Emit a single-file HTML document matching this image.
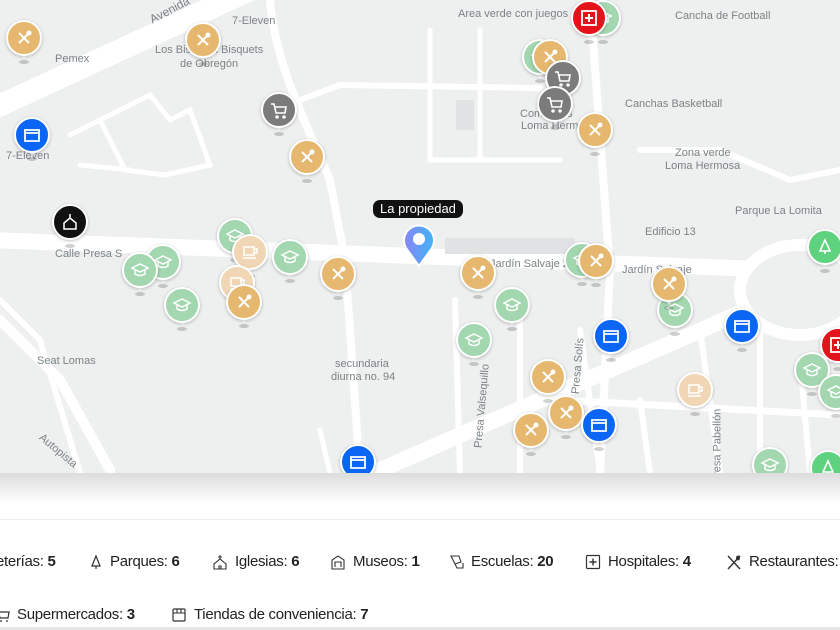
<!DOCTYPE html>
<html><head><meta charset="utf-8"><style>
*{margin:0;padding:0;box-sizing:border-box}
body{width:840px;height:630px;overflow:hidden;background:#fff;font-family:"Liberation Sans",sans-serif;position:relative}
#map{position:absolute;left:0;top:0;width:840px;height:473px;background:#eeefef;overflow:hidden}
.m{position:absolute;width:36px;height:46px;margin-left:-18px;margin-top:-18px}
.m .c{position:absolute;left:0;top:0;width:36px;height:36px;border-radius:50%;border:2.5px solid #fff;box-shadow:0 1px 3px rgba(0,0,0,.25);display:flex;align-items:center;justify-content:center}
.m .t{position:absolute;left:12px;top:31px;width:0;height:0;border-left:6px solid transparent;border-right:6px solid transparent;border-top:8px solid #fff}
.m .s{position:absolute;left:13px;top:40px;width:10px;height:4px;border-radius:50%;background:rgba(0,0,0,.18)}
.o{background:#e6b86f}.g{background:#a2d7b0}.cf{background:#f0d6b4}.b{background:#0b66f5}.gr{background:#7b7b7b}.r{background:#e4121b}.k{background:#111}.p{background:#5fd27f}
.lbl{position:absolute;color:#7b8387;font-size:11px;white-space:nowrap}
.lt{position:absolute;font-size:15px;color:#222;white-space:nowrap;letter-spacing:-0.3px}
.lt b{font-weight:700}
.li{position:absolute;width:16px;height:16px}
</style></head><body>
<div id="map">
<svg width="840" height="473" style="position:absolute;left:0;top:0">
<g stroke="#fff" fill="none" stroke-linecap="round">
<path d="M-10 110 L250 -10" stroke-width="22"/>
<path d="M-10 240 L840 272" stroke-width="16"/>
<path d="M380 470 L770 300 L840 285" stroke-width="16"/>
<path d="M270 0 C275 60 300 110 330 180 L345 260 L360 473" stroke-width="8"/>
<path d="M300 100 L340 85 L540 88" stroke-width="6"/>
<path d="M70 135 L150 95 L170 120 L190 110 L210 165 L165 175 L125 170 L100 120 M80 165 L130 170" stroke-width="5"/>
<path d="M430 30 L430 160 L560 160 M480 30 L480 160" stroke-width="5"/>
<path d="M590 0 L610 270 L600 473" stroke-width="8"/>
<path d="M640 150 L720 150 L790 180 L840 170" stroke-width="6"/>
<path d="M0 320 L60 380 L110 470" stroke-width="10"/>
<path d="M0 300 L40 340 L80 473" stroke-width="6"/>
<path d="M455 300 L460 473 M520 320 L520 473 M580 330 L600 473 M640 400 L650 473 M700 330 L720 473 M760 330 L760 473 M800 360 L810 473" stroke-width="6"/>
<path d="M560 400 L840 415" stroke-width="7"/>
<path d="M320 430 L330 473" stroke-width="5"/>
</g>
<ellipse cx="800" cy="290" rx="60" ry="45" fill="#eeefef" stroke="#fff" stroke-width="12"/>
<rect x="456" y="100" width="18" height="30" fill="#e0e2e3"/>
<rect x="445" y="238" width="130" height="16" fill="#e0e2e3"/>
</svg>
<div class="lbl" style="left:148px;top:3px;transform:rotate(-28deg);font-size:12px">Avenida</div>
<div class="lbl" style="left:232px;top:15px">7-Eleven</div>
<div class="lbl" style="left:55px;top:53px">Pemex</div>
<div class="lbl" style="left:155px;top:44px">Los Bisquets Bisquets</div>
<div class="lbl" style="left:180px;top:58px">de Obregón</div>
<div class="lbl" style="left:6px;top:150px">7-Eleven</div>
<div class="lbl" style="left:458px;top:8px">Area verde con juegos</div>
<div class="lbl" style="left:675px;top:10px">Cancha de Football</div>
<div class="lbl" style="left:625px;top:98px">Canchas Basketball</div>
<div class="lbl" style="left:675px;top:147px">Zona verde</div>
<div class="lbl" style="left:665px;top:160px">Loma Hermosa</div>
<div class="lbl" style="left:735px;top:205px">Parque La Lomita</div>
<div class="lbl" style="left:645px;top:226px">Edificio 13</div>
<div class="lbl" style="left:490px;top:258px">Jardín Salvaje 2</div>
<div class="lbl" style="left:622px;top:264px">Jardín Salvaje</div>
<div class="lbl" style="left:55px;top:248px">Calle Presa S</div>
<div class="lbl" style="left:37px;top:355px">Seat Lomas</div>
<div class="lbl" style="left:335px;top:358px">secundaria</div>
<div class="lbl" style="left:331px;top:371px">diurna no. 94</div>
<div class="lbl" style="left:520px;top:108px">Comercios</div>
<div class="lbl" style="left:521px;top:120px">Loma Hermosa</div>
<div class="lbl" style="left:440px;top:400px;transform:rotate(-85deg)">Presa Valsequillo</div>
<div class="lbl" style="left:550px;top:360px;transform:rotate(-85deg)">Presa Solís</div>
<div class="lbl" style="left:680px;top:440px;transform:rotate(-90deg)">Presa Pabellón</div>
<div class="lbl" style="left:35px;top:445px;transform:rotate(40deg)">Autopista</div>

<div id="mk"></div>
<div style="position:absolute;left:373px;top:200px;background:#111;color:#fff;font-size:13px;padding:1px 7px 2px;border-radius:7px">La propiedad</div>
<svg style="position:absolute;left:401px;top:222px" width="36" height="46" viewBox="0 0 36 46"><defs><linearGradient id="pg" x1="0" x2="1"><stop offset="0" stop-color="#8a86f6"/><stop offset="1" stop-color="#3fb4f5"/></linearGradient></defs><path d="M18 44 L5 26 A15 15 0 1 1 31 26 Z" fill="url(#pg)" stroke="#fff" stroke-width="2"/><circle cx="18" cy="17" r="6" fill="#fff"/></svg>
</div>
<div style="position:absolute;left:0;top:473px;width:840px;height:30px;background:linear-gradient(#dcdcdc,#fff)"></div>
<div style="position:absolute;left:0;top:519px;width:840px;height:1px;background:#ececec"></div>

<div class="lt" style="left:-4px;top:553px">eterías: <b>5</b></div>
<svg class="li" style="left:88px;top:554px" viewBox="0 0 16 16"><path d="M8 2 L4 12 H12 Z M8 12 V15" stroke="#333" stroke-width="1.2" fill="none"/></svg>
<div class="lt" style="left:110px;top:553px">Parques: <b>6</b></div>
<svg class="li" style="left:212px;top:554px" viewBox="0 0 16 16"><path d="M8 1 V5 M6 3 H10 M2 15 V10 L8 5 L14 10 V15 Z M7 15 V12 H9 V15" stroke="#333" stroke-width="1.1" fill="none"/></svg>
<div class="lt" style="left:235px;top:553px">Iglesias: <b>6</b></div>
<svg class="li" style="left:330px;top:554px" viewBox="0 0 16 16"><path d="M2 15 V6 L8 2 L14 6 V15 Z M5 13 V8 H11 V13" stroke="#333" stroke-width="1.1" fill="none"/></svg>
<div class="lt" style="left:353px;top:553px">Museos: <b>1</b></div>
<svg class="li" style="left:449px;top:554px" viewBox="0 0 16 16"><path d="M2 2 L10 2 L12 8 L6 10 Z M6 10 L8 14 H14 V9" stroke="#333" stroke-width="1.1" fill="none"/></svg>
<div class="lt" style="left:471px;top:553px">Escuelas: <b>20</b></div>
<svg class="li" style="left:585px;top:554px" viewBox="0 0 16 16"><rect x="1.5" y="1.5" width="13" height="13" rx="1" stroke="#333" stroke-width="1.2" fill="none"/><path d="M8 4.5 V11.5 M4.5 8 H11.5" stroke="#333" stroke-width="1.4"/></svg>
<div class="lt" style="left:608px;top:553px">Hospitales: <b>4</b></div>
<svg class="li" style="left:726px;top:554px" viewBox="0 0 16 16"><path d="M2 2 L14 15 M14 2 L2 15" stroke="#333" stroke-width="1.4"/><ellipse cx="12" cy="4" rx="2" ry="2.5" fill="#333"/></svg>
<div class="lt" style="left:749px;top:553px">Restaurantes: <b>9</b></div>

<svg class="li" style="left:-6px;top:607px" viewBox="0 0 16 16"><path d="M1 2 H4 L6 11 H14 L15 5 H5 M6 14 H8 M12 14 H14" stroke="#333" stroke-width="1.2" fill="none"/></svg>
<div class="lt" style="left:17px;top:606px">Supermercados: <b>3</b></div>
<svg class="li" style="left:171px;top:607px" viewBox="0 0 16 16"><rect x="2" y="2" width="12" height="12" rx="1" stroke="#333" stroke-width="1.2" fill="none"/><path d="M2 6 H14 M6 2 V6 M10 2 V6" stroke="#333" stroke-width="1.1"/></svg>
<div class="lt" style="left:194px;top:606px">Tiendas de conveniencia: <b>7</b></div>
<div style="position:absolute;left:0;top:627px;width:840px;height:3px;background:#e6e6e6"></div>
<script>
var M=[[540,57,'g'],[603,18,'g'],[24,38,'o'],[203,40,'o'],[32,135,'b'],[279,110,'gr'],[307,157,'o'],[70,222,'k'],[235,236,'g'],[250,252,'cf'],[163,262,'g'],[140,270,'g'],[290,257,'g'],[237,283,'cf'],[244,302,'o'],[182,305,'g'],[338,274,'o'],[478,273,'o'],[512,305,'g'],[474,340,'g'],[550,57,'o'],[589,18,'r'],[563,78,'gr'],[555,104,'gr'],[595,130,'o'],[582,260,'g'],[596,261,'o'],[675,310,'g'],[669,284,'o'],[611,336,'b'],[742,326,'b'],[825,247,'p'],[548,377,'o'],[566,413,'o'],[531,430,'o'],[599,425,'b'],[695,390,'cf'],[838,345,'r'],[812,370,'g'],[836,392,'g'],[358,462,'b'],[770,465,'g'],[828,468,'p']];
var ic={o:'<path d="M11 11 L21 21 M21 11 L11 21" stroke="#fff" stroke-width="2"/><circle cx="21" cy="11" r="2.5" fill="#fff"/>',g:'<path d="M8 14 L16 10 L24 14 L16 18 Z M11 16 V20 Q16 23 21 20 V16" stroke="#fff" stroke-width="1.5" fill="none"/>',cf:'<path d="M10 11 H20 V19 H10 Z M20 13 H23 V17 H20 M9 22 H22" stroke="#fff" stroke-width="1.5" fill="none"/>',b:'<path d="M9 11 H23 V22 H9 Z M9 14 H23" stroke="#fff" stroke-width="1.8" fill="none"/>',gr:'<path d="M8 10 H11 L13 19 H22 L23 13 H12 M14 22 A1 1 0 1 0 14.1 22 M21 22 A1 1 0 1 0 21.1 22" stroke="#fff" stroke-width="1.6" fill="none"/>',r:'<rect x="9" y="9" width="14" height="14" fill="none" stroke="#fff" stroke-width="1.8"/><path d="M16 12 V20 M12 16 H20" stroke="#fff" stroke-width="2"/>',k:'<path d="M16 8 V12 M10 23 V17 L16 12 L22 17 V23 Z" stroke="#fff" stroke-width="1.5" fill="none"/>',p:'<path d="M16 9 L11 20 H21 Z M16 20 V23" stroke="#fff" stroke-width="1.6" fill="none"/>'};
var h='';M.forEach(function(a){h+='<div class="m" style="left:'+a[0]+'px;top:'+a[1]+'px"><div class="s"></div><div class="t"></div><div class="c '+a[2]+'"><svg width="32" height="32">'+ic[a[2]]+'</svg></div></div>'});
document.getElementById('mk').innerHTML=h;
</script>
</body></html>
